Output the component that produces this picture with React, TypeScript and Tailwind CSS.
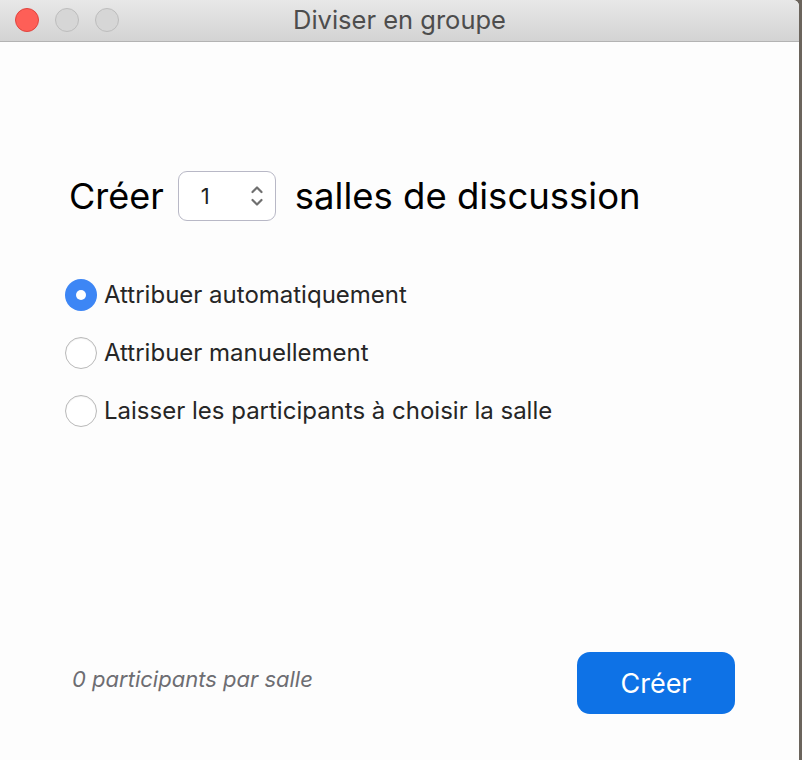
const options = [
  "Attribuer automatiquement",
  "Attribuer manuellement",
  "Laisser les participants à choisir la salle",
];

const Radio = ({ checked }: { checked: boolean }) =>
  checked ? (
    <span className="flex h-[32px] w-[32px] shrink-0 items-center justify-center rounded-full bg-[#3d86f5]">
      <span className="h-[10px] w-[10px] rounded-full bg-white" />
    </span>
  ) : (
    <span className="h-[32px] w-[32px] shrink-0 rounded-full border border-[#b9b9b9] bg-white shadow-[inset_0_1px_1px_rgba(0,0,0,0.06)]" />
  );

const App = () => {
  return (
    <div className="flex h-[760px] w-[802px] bg-[#6b645c] font-['Inter','Liberation_Sans',Arial,sans-serif]">
      <div className="flex w-[799px] flex-col overflow-hidden rounded-tr-[6px] bg-[#fdfdfd]">
        {/* title bar */}
        <div className="relative flex h-[42px] shrink-0 items-center justify-center border-b border-[#b3b3b3] bg-gradient-to-b from-[#e8e8e8] to-[#d3d3d3]">
          <div className="absolute left-[15px] top-[8px] flex gap-[16px]">
            <span className="h-[24px] w-[24px] rounded-full border border-[#e0443e] bg-[#fe5f57]" />
            <span className="h-[24px] w-[24px] rounded-full border border-[#bdbdbd] bg-[#d6d6d6]" />
            <span className="h-[24px] w-[24px] rounded-full border border-[#bdbdbd] bg-[#d6d6d6]" />
          </div>
          <span className="text-[25.5px] text-[#4d4d4d]">Diviser en groupe</span>
        </div>

        {/* body */}
        <div className="flex flex-1 flex-col px-[65px]">
          <div className="mt-[129px] flex items-center">
            <span className="ml-[4px] text-[36px] leading-none text-black">Créer</span>
            <div className="ml-[14px] flex h-[50px] w-[98px] items-center justify-between rounded-[9px] border border-[#b8b8c6] bg-white pl-[22px] pr-[10px]">
              <span className="text-[22px] text-[#222]">1</span>
              <svg width="16" height="26" viewBox="0 0 16 26" fill="none" stroke="#6f6f6f" strokeWidth="2.2" strokeLinecap="round" strokeLinejoin="round">
                <path d="M3.5 9 L8 4.5 L12.5 9" />
                <path d="M3.5 17 L8 21.5 L12.5 17" />
              </svg>
            </div>
            <span className="ml-[19px] text-[36.5px] leading-none text-black">salles de discussion</span>
          </div>

          <div className="mt-[58px] flex flex-col gap-[26px]">
            {options.map((o, i) => (
              <label key={o} className="flex h-[32px] items-center gap-[7px]">
                <Radio checked={i === 0} />
                <span className="text-[24px] leading-[32px] text-[#262626]">{o}</span>
              </label>
            ))}
          </div>

          <div className="mt-auto mb-[46px] flex items-center justify-between">
            <span className="mb-[7px] ml-[7px] text-[22px] italic text-[#6d6d72]">0 participants par salle</span>
            <button className="mr-[-1px] h-[62px] w-[158px] rounded-[13px] bg-[#0e72e6] pt-[3px] text-[27px] text-white">
              Créer
            </button>
          </div>
        </div>
      </div>
    </div>
  );
};

export default App;
